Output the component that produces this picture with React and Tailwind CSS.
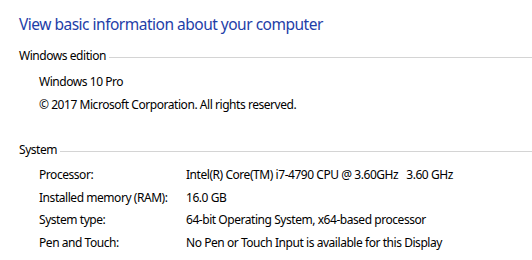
import React from 'react';

const SectionHeader = ({ title }) => (
  <div className="flex items-center gap-[3px] h-[18px] text-[12px] tracking-[-0.45px] text-black">
    <span>{title}</span>
    <div className="flex-1 h-px bg-[#d4d4d4] mt-[2px]"></div>
  </div>
);

const App = () => {
  const system = [
    { label: 'Processor:', value: 'Intel(R) Core(TM) i7-4790 CPU @ 3.60GHz   3.60 GHz' },
    { label: 'Installed memory (RAM):', value: '16.0 GB' },
    { label: 'System type:', value: '64-bit Operating System, x64-based processor' },
    { label: 'Pen and Touch:', value: 'No Pen or Touch Input is available for this Display' }
  ];

  return (
    <div className="w-[532px] h-[260px] bg-white pl-[19px] overflow-hidden font-['Noto_Sans',sans-serif]">
      <h1 className="pt-[12px] text-[15.5px] leading-[24px] tracking-[-0.5px] text-[#1e3ea8] whitespace-nowrap">
        View basic information about your computer
      </h1>

      <div className="mt-[11px]">
        <SectionHeader title="Windows edition" />
        <div className="pl-[20px] pt-[6px] text-[12px] leading-[22.5px] tracking-[-0.45px] text-black">
          <div>Windows 10 Pro</div>
          <div>© 2017 Microsoft Corporation. All rights reserved.</div>
        </div>
      </div>

      <div className="mt-[25px]">
        <SectionHeader title="System" />
        <div className="pl-[20px] pt-[5px] text-[12px] leading-[22.5px] tracking-[-0.45px] text-black">
          {system.map((row) => (
            <div key={row.label} className="grid grid-cols-[147px_1fr] whitespace-pre">
              <span>{row.label}</span>
              <span>{row.value}</span>
            </div>
          ))}
        </div>
      </div>
    </div>
  );
};

export default App;
